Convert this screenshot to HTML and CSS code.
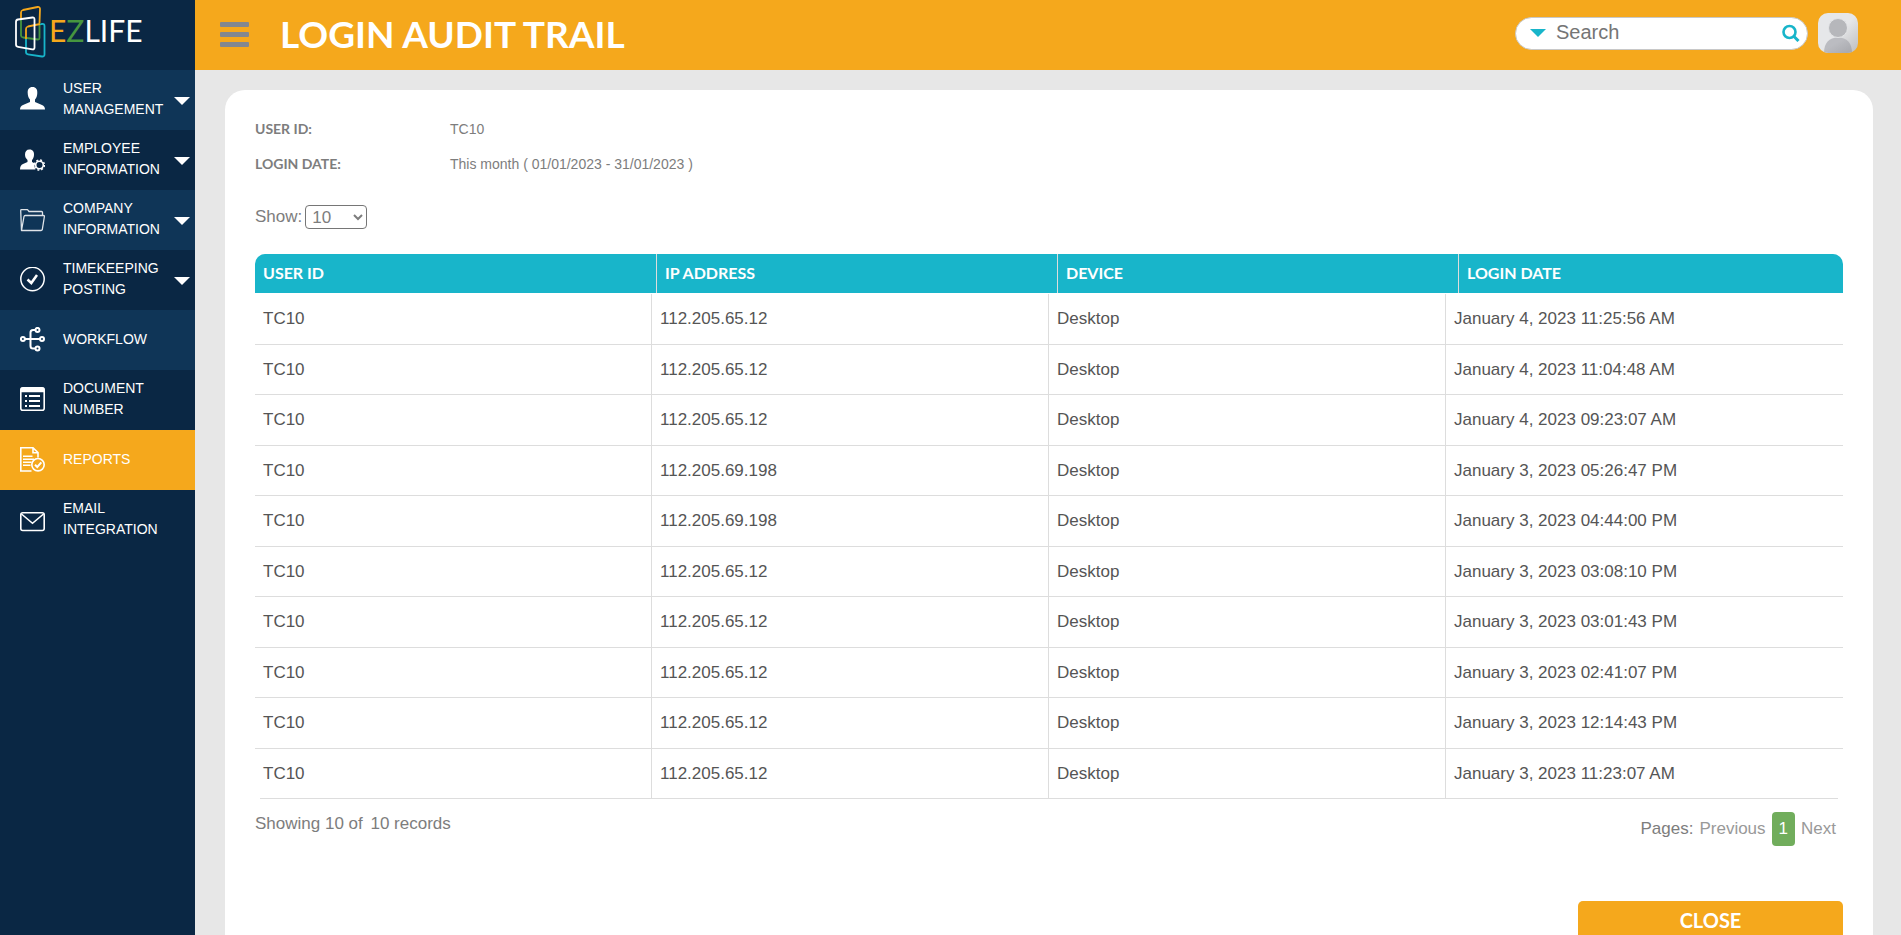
FILE: index.html
```
<!DOCTYPE html>
<html lang="en">
<head>
<meta charset="utf-8">
<title>Login Audit Trail</title>
<link rel="stylesheet" href="styles.css">
</head>
<body>
<div class="app">
  <aside class="sidebar">
    <a class="brand" href="#" aria-label="EZLIFE">
      <svg class="brand-mark" width="32" height="52" viewBox="0 0 32 52" fill="none" stroke-width="1.8">
        <path d="M6 13V6.500Q6 4.500 8 4L22.500 1Q25 .700 25 3L24.500 17" stroke="#f5a81c"/>
        <path d="M6 12V29.500Q6 31 8 31.500L23 33.500Q24.500 33.500 24.500 32V17" stroke="#46963f"/>
        <path d="M11 33V46Q11 48 13 48.300L27 50.500Q29.500 50.700 29.500 48.500V20Q29.500 17.500 27 18L25 18.500" stroke="#18b5ca"/>
        <path d="M11 33V23Q11 21 13 20.500L25 18" stroke="#f5a81c"/>
        <path d="M1 16Q1 13.800 3 13.500L17.500 11.500Q19.500 11.300 19.500 13.500V41.500Q19.500 43.700 17.300 43.300L3 40.800Q1 40.500 1 38.500Z" stroke="#fff"/>
      </svg>
      <span class="brand-name"><span class="brand-e">E</span><span class="brand-z">Z</span>LIFE</span>
    </a>
    <nav class="menu">
      <a class="item alt" href="#">
        <svg class="icon" viewBox="0 0 25 25"><path fill="#fff" d="M12.500 0C16 0 17.500 2.500 17.300 6C17.200 9 16.500 11 15 12.500V15L22 18Q25 19.300 25 22.500H0Q0 19.300 3 18L10 15V12.500C8.500 11 7.800 9 7.700 6C7.500 2.500 9 0 12.500 0Z"/></svg>
        <span class="label">USER MANAGEMENT</span><span class="caret"></span></a>
      <a class="item" href="#">
        <svg class="icon" viewBox="0 0 25 25"><path fill="#fff" d="M9.500 2.500C13 2.500 14.300 5 14 8C13.800 10.500 13 12 12 13V15L15 16.500Q13.500 19.500 15.500 22.500H0Q0 18 3 17L7.500 15V13C6 11.500 5 10 5 7.500C5 4.500 6.500 2.500 9.500 2.500Z"/><circle cx="19.500" cy="18" r="3.800" fill="none" stroke="#fff" stroke-width="1.600"/><circle cx="19.500" cy="18" r="5" fill="none" stroke="#fff" stroke-width="1.400" stroke-dasharray="2 1.930"/></svg>
        <span class="label">EMPLOYEE INFORMATION</span><span class="caret"></span></a>
      <a class="item alt" href="#">
        <svg class="icon" viewBox="0 0 25 25" fill="none" stroke="#dfe4e9" stroke-width="1.300" stroke-linejoin="round"><path d="M1.500 23.500L.700 3.500Q.700 2.700 1.500 2.700H7.500L9 4.500H21.500Q22.500 4.500 22.500 5.500V8.500M1.500 23.500L4 9.500Q4.200 8.500 5.200 8.500H23.500Q24.500 8.500 24.400 9.500L22.300 22.500Q22 23.500 21 23.500Z"/></svg>
        <span class="label">COMPANY INFORMATION</span><span class="caret"></span></a>
      <a class="item" href="#">
        <svg class="icon" viewBox="0 0 25 25" fill="none" stroke="#fff"><circle cx="12.500" cy="12" r="11.700" stroke-width="1.500"/><path d="M7.500 12.500L11.300 16L17 8" stroke-width="2.500"/></svg>
        <span class="label">TIMEKEEPING POSTING</span><span class="caret"></span></a>
      <a class="item alt" href="#">
        <svg class="icon" viewBox="0 0 25 25" fill="none" stroke="#fff" stroke-width="2"><circle cx="2.900" cy="12" r="2"/><circle cx="22" cy="12" r="2"/><circle cx="17.500" cy="2.900" r="2"/><circle cx="17.500" cy="21.500" r="2"/><path d="M5 12H20M15.500 3H13Q10.500 3 10.500 5.500V19Q10.500 21.500 13 21.500H15.500"/></svg>
        <span class="label">WORKFLOW</span></a>
      <a class="item" href="#">
        <svg class="icon" viewBox="0 0 25 25" fill="none" stroke="#fff"><rect x=".8" y=".8" width="23.400" height="22.400" rx="2" stroke-width="1.600"/><path d="M1 3H24" stroke-width="4.500"/><path d="M5 9H7M9 9H20M5 14H7M9 14H20M5 19H7M9 19H20" stroke-width="2"/></svg>
        <span class="label">DOCUMENT NUMBER</span></a>
      <a class="item active" href="#">
        <svg class="icon" viewBox="0 0 25 25" fill="none" stroke="#fff" stroke-width="1.600"><path d="M11.500 24H.800V.800H13L18 5.500V10.500M13 .800V5.800H18M3 9.300H12.500M3 12.300H14M3 15.300H11.500M3 18.300H10.500"/><circle cx="18" cy="17.700" r="6.200"/><path d="M15 17.700L17.300 20L21.300 15.300" stroke-width="2"/></svg>
        <span class="label">REPORTS</span></a>
      <a class="item" href="#">
        <svg class="icon" viewBox="0 0 25 25" fill="none" stroke="#fff" stroke-width="1.600"><rect x=".8" y="5.800" width="23.400" height="17.700" rx="2"/><path d="M1.500 7L12.500 16.300L23.500 7"/></svg>
        <span class="label">EMAIL INTEGRATION</span></a>
    </nav>
  </aside>

  <div class="page">
    <header class="topbar">
      <button class="burger" type="button" aria-label="Toggle menu"><span></span><span></span><span></span></button>
      <h1 class="title">LOGIN AUDIT TRAIL</h1>
      <form class="search">
        <button class="search-scope" type="button" aria-label="Search options"><span class="caret teal"></span></button>
        <input class="search-input" type="text" placeholder="Search" aria-label="Search">
        <button class="search-go" type="button" aria-label="Go"><svg width="18" height="18" viewBox="0 0 18 18" fill="none" stroke="#18b5ca"><circle cx="7.500" cy="8" r="6" stroke-width="2.600"/><path d="M11.500 12L16.500 17" stroke-width="3"/></svg></button>
      </form>
      <button class="avatar" type="button" aria-label="Profile"><svg width="40" height="40" viewBox="0 0 40 40">
        <defs><linearGradient id="bg" x1="0" y1="0" x2="1" y2="1"><stop offset=".5" stop-color="#e6e7e9"/><stop offset="1" stop-color="#bcbdbf"/></linearGradient>
        <linearGradient id="fg" x1="0" y1="0" x2="1" y2="1"><stop offset=".4" stop-color="#bbbcc1"/><stop offset="1" stop-color="#a6a7ac"/></linearGradient></defs>
        <rect width="40" height="40" fill="url(#bg)"/><path d="M6 40C6 30 11 24.500 20 24.500S34 30 34 40Z" fill="url(#fg)"/><circle cx="20" cy="15" r="9.500" fill="#b6b7bb" stroke="#e3e4e6" stroke-width="1"/></svg></button>
    </header>

    <main class="card">
      <dl class="facts">
        <dt>USER ID:</dt><dd>TC10</dd>
        <dt>LOGIN DATE:</dt><dd>This month ( 01/01/2023 - 31/01/2023 )</dd>
      </dl>
      <div class="show">
        <label for="size">Show:</label>
        <select id="size" class="size"><option>10</option><option>25</option><option>50</option></select>
      </div>
      <table class="grid">
        <thead><tr><th>USER ID</th><th>IP ADDRESS</th><th>DEVICE</th><th>LOGIN DATE</th></tr></thead>
        <tbody>
          <tr><td>TC10</td><td>112.205.65.12</td><td>Desktop</td><td>January 4, 2023 11:25:56 AM</td></tr>
          <tr><td>TC10</td><td>112.205.65.12</td><td>Desktop</td><td>January 4, 2023 11:04:48 AM</td></tr>
          <tr><td>TC10</td><td>112.205.65.12</td><td>Desktop</td><td>January 4, 2023 09:23:07 AM</td></tr>
          <tr><td>TC10</td><td>112.205.69.198</td><td>Desktop</td><td>January 3, 2023 05:26:47 PM</td></tr>
          <tr><td>TC10</td><td>112.205.69.198</td><td>Desktop</td><td>January 3, 2023 04:44:00 PM</td></tr>
          <tr><td>TC10</td><td>112.205.65.12</td><td>Desktop</td><td>January 3, 2023 03:08:10 PM</td></tr>
          <tr><td>TC10</td><td>112.205.65.12</td><td>Desktop</td><td>January 3, 2023 03:01:43 PM</td></tr>
          <tr><td>TC10</td><td>112.205.65.12</td><td>Desktop</td><td>January 3, 2023 02:41:07 PM</td></tr>
          <tr><td>TC10</td><td>112.205.65.12</td><td>Desktop</td><td>January 3, 2023 12:14:43 PM</td></tr>
          <tr><td>TC10</td><td>112.205.65.12</td><td>Desktop</td><td>January 3, 2023 11:23:07 AM</td></tr>
        </tbody>
      </table>
      <div class="summary">
        <p class="count">Showing 10 of <span class="total">10 records</span></p>
        <nav class="pager" aria-label="Pages"><span>Pages:</span><a href="#">Previous</a><a class="current" href="#" aria-current="page">1</a><a href="#">Next</a></nav>
      </div>
      <div class="actions"><button class="close" type="button">CLOSE</button></div>
    </main>
  </div>
</div>
</body>
</html>
```
FILE: styles.css
```
* { box-sizing: border-box; }
body {
  margin: 0;
  background: #e7e7e7;
  color: #7d7d7d;
  font: 16px/24px "Liberation Sans", Arial, sans-serif;
}
a { color: inherit; text-decoration: none; }
button { padding: 0; border: 0; background: none; cursor: pointer; }
.app { display: flex; height: 100vh; overflow: hidden; }

/* Sidebar */
.sidebar { flex: 0 0 195px; background: #0a2744; color: #fff; }
.brand { display: flex; gap: 2px; height: 70px; padding: 6px 0 0 15px; }
.brand-name { padding-top: 6px; font: 30px/36px Lato, sans-serif; }
.brand-e { color: #f5a81c; }
.brand-z { color: #46963f; }
.item {
  display: flex;
  align-items: center;
  height: 60px;
  padding: 0 5px 2px 20px;
  font-size: 14px;
  line-height: 21px;
}
.item.alt { background: #0f3557; }
.item.active { background: #f5a81c; }
.icon { flex: 0 0 25px; height: 25px; margin-right: 18px; }
.label { flex: 1; }
.caret {
  flex: none;
  border: 8px solid transparent;
  border-top-color: #fff;
  border-bottom: 0;
}
.item .caret { margin-top: 4px; }
.caret.teal { display: block; border-top-color: #18b5ca; }

/* Top bar */
.page { flex: 1; min-width: 0; }
.topbar {
  display: flex;
  align-items: center;
  height: 70px;
  padding: 0 43px 4px 25px;
  background: #f5a81c;
}
.burger { display: grid; gap: 5px; width: 29px; margin: 2px 31px 0 0; }
.burger span { height: 5px; border-radius: 1px; background: #828790; }
.title { margin: 0; padding-top: 2px; color: #fff; font: 700 37px/44px Lato, sans-serif; }
.search {
  display: flex;
  align-items: center;
  width: 293px;
  height: 33px;
  margin: 0 10px 0 auto;
  padding: 0 7px 0 14px;
  border: 1px solid #c8c8c8;
  border-radius: 17px;
  background: #fff;
}
.search-input {
  flex: 1;
  min-width: 0;
  padding: 0 0 2px 10px;
  border: 0;
  outline: 0;
  background: none;
  font: 20px/24px "Liberation Sans", Arial, sans-serif;
}
.search-input::placeholder { color: #757575; }
.search-go svg, .avatar svg { display: block; }
.avatar { overflow: hidden; border-radius: 10px; }

/* Content */
.card {
  margin: 20px 28px 0 30px;
  padding: 22px 30px 40px;
  border-radius: 20px;
  background: #fff;
}
.facts {
  display: grid;
  grid-template-columns: 195px 1fr;
  margin: 0;
  font-size: 14px;
  line-height: 35px;
}
.facts dt { font-family: Lato, sans-serif; font-weight: 700; line-height: 34px; }
.facts dd { margin: 0; }
.show { display: flex; align-items: center; gap: 3px; margin: 23px 0 25px; font-size: 17px; }
.size {
  width: 62px;
  height: 24px;
  padding: 0 2px;
  border: 1px solid #767676;
  border-radius: 4px;
  background: #fff;
  color: inherit;
  font: 17px/20px "Liberation Sans", Arial, sans-serif;
}
.grid { display: block; text-align: left; }
.grid thead, .grid tbody { display: block; }
.grid tr { display: grid; grid-template-columns: repeat(4, 1fr); }
.grid thead tr {
  grid-template-columns: 401fr 401fr 401fr 385fr;
  margin-bottom: 1px;
  overflow: hidden;
  border-radius: 10px 10px 0 0;
  background: #18b5ca;
}
.grid th {
  padding: 0 8px 1px;
  color: #fff;
  font: 700 16px/38px Lato, sans-serif;
}
.grid th + th { border-left: 1px solid #ddd; }
.grid td {
  padding: 0 8px;
  border-right: 1px solid #ddd;
  border-bottom: 1px solid #ddd;
  color: #555;
  font-size: 17px;
  line-height: 50px;
}
.grid tr:nth-child(even) td { line-height: 49px; }
.grid td:last-child { border-right: 0; }
/* The closing rule stops short of both table edges. */
.grid tbody tr:last-child {
  padding-bottom: 1px;
  background: linear-gradient(#ddd, #ddd) center bottom / calc(100% - 10px) 1px no-repeat;
}
.grid tr:last-child td { border-bottom: 0; }
.summary { display: flex; justify-content: space-between; padding: 13px 7px 0 0; font-size: 17px; }
.count { margin: 0; line-height: 24px; }
.total { margin-left: 3px; }
.pager { display: flex; gap: 6px; line-height: 34px; }
.pager a { color: #999; }
.pager .current { padding: 0 7px; border-radius: 4px; background: #71ad5c; color: #fff; }
.actions { display: flex; justify-content: flex-end; margin-top: 55px; }
.close {
  width: 265px;
  border-radius: 5px;
  background: #f5a81c;
  color: #fff;
  font: 700 20px/38px Lato, sans-serif;
}
```
